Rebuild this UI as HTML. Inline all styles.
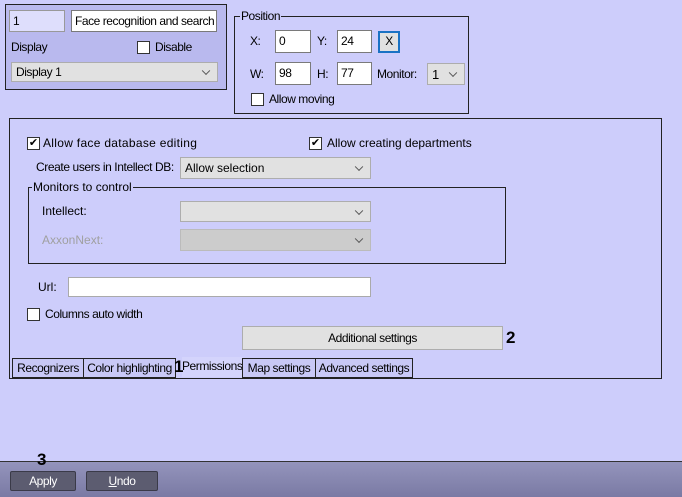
<!DOCTYPE html>
<html><head><meta charset="utf-8"><style>
*{box-sizing:border-box}
body{margin:0;width:682px;height:497px;background:#cdcdfb;font-family:"Liberation Sans",sans-serif;font-size:12px;color:#000;position:relative;overflow:hidden}
.a,.inp,.sel,.tab{position:absolute;white-space:nowrap}
.n{font-size:12px;letter-spacing:-0.45px}
.inp{background:#fff;border:1px solid #7a7a7a;padding:3px 3px;overflow:hidden}
.sel{background:#e1e1e1;border:1px solid #adadad;padding:3px 4px}
.sel:after{content:"";position:absolute;right:8px;top:50%;width:5px;height:5px;border-right:1px solid #555;border-bottom:1px solid #555;transform:translateY(-70%) rotate(45deg)}
.cb{position:absolute;width:13px;height:13px;background:#fff;border:1px solid #333;font-size:11px;line-height:10px;text-align:center}
.grp{position:absolute;border:1px solid #222}
.lbl{position:absolute;background:#cdcdfb;padding:0 1px;top:-8px;white-space:nowrap}
.tab{top:358px;height:20px;border:1px solid #222;background:#c8c8f6;padding:2px 0 0;text-align:center;overflow:hidden}
</style></head><body>
<div class="a" style="left:5px;top:4px;width:222px;height:86px;background:#b9b9ee;border:1px solid #222"></div>
<div class="inp n" style="left:9px;top:10px;width:56px;height:22px;background:#dedefc;border-color:#999">1</div>
<div class="inp n" style="left:71px;top:10px;width:146px;height:22px">Face recognition and search 1</div>
<div class="a n" style="left:11px;top:40px">Display</div>
<div class="cb" style="left:137px;top:41px"></div>
<div class="a n" style="left:155px;top:40px">Disable</div>
<div class="sel n" style="left:11px;top:62px;width:207px;height:20px;padding-top:2px">Display 1</div>

<div class="grp n" style="left:234px;top:16px;width:235px;height:98px"><span class="lbl" style="left:5px">Position</span></div>
<div class="a n" style="left:250px;top:34px">X:</div>
<div class="inp n" style="left:275px;top:30px;width:36px;height:23px">0</div>
<div class="a n" style="left:317px;top:34px">Y:</div>
<div class="inp n" style="left:337px;top:30px;width:35px;height:23px">24</div>
<div class="a n" style="left:378px;top:31px;width:22px;height:22px;background:#e1e1e1;border:2px solid #1a72c4;text-align:center;line-height:17px">X</div>
<div class="a n" style="left:250px;top:67px">W:</div>
<div class="inp n" style="left:275px;top:62px;width:36px;height:23px">98</div>
<div class="a n" style="left:317px;top:67px">H:</div>
<div class="inp n" style="left:337px;top:62px;width:35px;height:23px">77</div>
<div class="a n" style="left:377px;top:67px">Monitor:</div>
<div class="sel n" style="left:427px;top:63px;width:38px;height:22px;font-size:13px">1</div>
<div class="cb" style="left:251px;top:93px"></div>
<div class="a n" style="left:269px;top:92px">Allow moving</div>

<div class="grp" style="left:9px;top:118px;width:653px;height:261px"></div>
<div class="cb" style="left:27px;top:137px">✔</div>
<div class="a" style="left:43px;top:136px;letter-spacing:0.3px">Allow face database editing</div>
<div class="cb" style="left:309px;top:137px">✔</div>
<div class="a" style="left:327px;top:136px">Allow creating departments</div>
<div class="a" style="left:36px;top:160px;letter-spacing:-0.4px">Create users in Intellect DB:</div>
<div class="sel" style="left:180px;top:157px;width:191px;height:22px;padding-top:3px">Allow selection</div>
<div class="grp" style="left:28px;top:187px;width:478px;height:77px"><span class="lbl" style="left:3px">Monitors to control</span></div>
<div class="a" style="left:42px;top:204px">Intellect:</div>
<div class="sel" style="left:180px;top:201px;width:191px;height:21px"></div>
<div class="a" style="left:42px;top:233px;color:#a0a0a0">AxxonNext:</div>
<div class="sel" style="left:180px;top:229px;width:191px;height:22px;background:#cccccc;border-color:#bbb"></div>
<div class="a" style="left:38px;top:280px">Url:</div>
<div class="inp" style="left:68px;top:277px;width:303px;height:20px;border-color:#aaa"></div>
<div class="cb" style="left:27px;top:308px"></div>
<div class="a n" style="left:45px;top:307px">Columns auto width</div>
<div class="a n" style="left:242px;top:326px;width:261px;height:24px;background:#e1e1e1;border:1px solid #adadad;text-align:center;line-height:22px">Additional settings</div>
<div class="a" style="left:506px;top:328px;font-size:17px;font-weight:bold">2</div>

<div class="tab n" style="left:12px;width:72px">Recognizers</div>
<div class="tab n" style="left:83px;width:93px">Color highlighting</div>
<div class="tab n" style="left:182px;width:61px;top:357px;background:#d4d4fc;border:none;text-align:left;padding-left:0">Permissions</div>
<div class="a" style="left:174px;top:357px;font-size:17px;font-weight:bold;line-height:20px">1</div>
<div class="tab n" style="left:242px;width:74px">Map settings</div>
<div class="tab n" style="left:315px;width:98px">Advanced settings</div>

<div class="a" style="left:0;top:461px;width:682px;height:36px;background:linear-gradient(#9494bc,#7a7aa4);border-top:1px solid #333"></div>
<div class="a" style="left:37px;top:450px;font-size:17px;font-weight:bold">3</div>
<div class="a n" style="left:10px;top:471px;width:66px;height:20px;background:#5c5c70;border:1px solid #3a3a48;border-radius:2px;color:#fff;text-align:center;line-height:18px">Apply</div>
<div class="a n" style="left:86px;top:471px;width:72px;height:20px;background:#5c5c70;border:1px solid #3a3a48;border-radius:2px;color:#fff;text-align:center;line-height:18px"><u>U</u>ndo</div>
</body></html>
